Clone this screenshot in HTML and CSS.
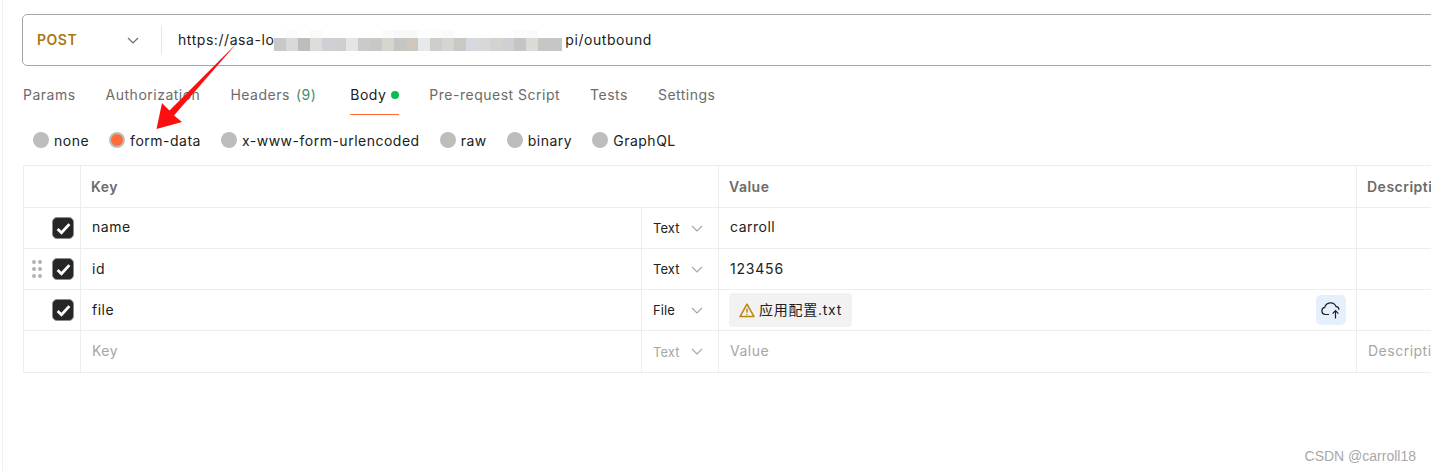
FILE: index.html
```html
<!DOCTYPE html>
<html lang="en">
<head>
<meta charset="utf-8">
<title>POST outbound</title>
<link rel="stylesheet" href="styles.css">
</head>
<body>
<main class="app">
  <div class="urlbar">
    <div class="method">
      <span class="method-name">POST</span>
      <svg class="chev chev-dark" viewBox="0 0 12 7"><path d="M1 1l5 5 5-5"/></svg>
    </div>
    <div class="url"><span>https://asa-lo</span><span class="mosaic"></span><span>pi/outbound</span></div>
  </div>

  <nav class="tabs">
    <span class="tab">Params</span>
    <span class="tab">Authorization</span>
    <span class="tab tab-headers">Headers <span class="count">(9)</span></span>
    <span class="tab tab-active">Body<i class="dot"></i></span>
    <span class="tab">Pre-request Script</span>
    <span class="tab">Tests</span>
    <span class="tab">Settings</span>
  </nav>

  <div class="radios">
    <label class="radio"><i class="circle"></i>none</label>
    <label class="radio"><i class="circle circle-on"></i>form-data</label>
    <label class="radio"><i class="circle"></i>x-www-form-urlencoded</label>
    <label class="radio"><i class="circle"></i>raw</label>
    <label class="radio"><i class="circle"></i>binary</label>
    <label class="radio"><i class="circle"></i>GraphQL</label>
  </div>

  <div class="grid">
    <div class="row row-head">
      <div class="cell cell-check"></div>
      <div class="cell cell-key wide head">Key</div>
      <div class="cell cell-value head">Value</div>
      <div class="cell cell-desc head">Description</div>
    </div>

    <div class="row">
      <div class="cell cell-check"><span class="check"><svg viewBox="0 0 14 12"><path d="M1.5 6.5l3.6 3.4 7.4-8"/></svg></span></div>
      <div class="cell cell-key nudge">name</div>
      <div class="cell cell-type">Text<svg class="chev" viewBox="0 0 12 7"><path d="M1 1l5 5 5-5"/></svg></div>
      <div class="cell cell-value nudge">carroll</div>
      <div class="cell cell-desc"></div>
    </div>

    <div class="row">
      <div class="cell cell-check">
        <span class="grip"><i></i><i></i><i></i><i></i><i></i><i></i></span>
        <span class="check"><svg viewBox="0 0 14 12"><path d="M1.5 6.5l3.6 3.4 7.4-8"/></svg></span>
      </div>
      <div class="cell cell-key">id</div>
      <div class="cell cell-type">Text<svg class="chev" viewBox="0 0 12 7"><path d="M1 1l5 5 5-5"/></svg></div>
      <div class="cell cell-value digits">123456</div>
      <div class="cell cell-desc"></div>
    </div>

    <div class="row">
      <div class="cell cell-check"><span class="check"><svg viewBox="0 0 14 12"><path d="M1.5 6.5l3.6 3.4 7.4-8"/></svg></span></div>
      <div class="cell cell-key">file</div>
      <div class="cell cell-type">File<svg class="chev" viewBox="0 0 12 7"><path d="M1 1l5 5 5-5"/></svg></div>
      <div class="cell cell-value cell-file">
        <span class="chip">
          <svg class="warn" viewBox="0 0 16 15"><path d="M8 1.2L1 13.6h14z"/><path d="M8 5.6v4.2M8 11v1.1"/></svg>
          <span>应用配置.txt</span>
        </span>
        <button class="upload" type="button" aria-label="Upload">
          <svg viewBox="0 0 22 20"><path d="M9 14.5H5.2a3.6 3.6 0 0 1-.5-7.1A6 6 0 0 1 16 6.4a3.5 3.5 0 0 1 3 3.4"/><path d="M15.5 18.5v-7.5M12.6 13.6l2.9-2.9 2.9 2.9"/></svg>
        </button>
      </div>
      <div class="cell cell-desc"></div>
    </div>

    <div class="row row-last">
      <div class="cell cell-check"></div>
      <div class="cell cell-key ph nudge">Key</div>
      <div class="cell cell-type ph">Text<svg class="chev" viewBox="0 0 12 7"><path d="M1 1l5 5 5-5"/></svg></div>
      <div class="cell cell-value ph nudge">Value</div>
      <div class="cell cell-desc ph nudge">Description</div>
    </div>
  </div>
</main>

<svg class="arrow" viewBox="0 0 1431 471"><polygon points="237,43 169.5,110.5 162,103 156.5,129 182,122 174,115.5"/></svg>
<span class="watermark">CSDN @carroll18</span>
</body>
</html>
```
FILE: styles.css
```css
* { box-sizing: border-box; }
html, body { margin: 0; height: 100%; }
body {
  position: relative;
  width: 1431px;
  height: 471px;
  overflow: hidden;
  background: #fff;
  color: #212121;
  font: 14px/20px Inter, "Noto Sans CJK SC", sans-serif;
  letter-spacing: .5px;
}
.app {
  margin-left: 2px;
  height: 471px;
  border-left: 1px solid #f0f0f0;
  padding: 14px 0 0 19px;
  overflow: hidden;
}
.urlbar {
  display: flex;
  align-items: center;
  width: 1500px;
  height: 52px;
  border: 1px solid #a6a6a6;
  border-radius: 5px;
}
.method {
  display: flex;
  align-items: center;
  justify-content: space-between;
  width: 139px;
  height: 30px;
  padding: 0 22px 0 14px;
  border-right: 1px solid #e6e6e6;
}
.method-name { font-weight: 600; color: #a9780f; }
.chev { width: 12px; height: 7px; fill: none; stroke: #a6a6a6; stroke-width: 1.2; }
.chev-dark { stroke: #6b6b6b; }
.url { display: flex; align-items: center; padding-left: 16px; letter-spacing: .56px; }
.mosaic {
  width: 291px;
  height: 21px;
  background-repeat: no-repeat;
  background-position: 0 8px, 0 0;
  background-size: 288px 13px, 288px 8px;
  background-image:
    linear-gradient(90deg,
      #c8c8c8 0 12px, #d8d9db 0 24px, #bdbdbd 0 36px, #dcdcd8 0 48px, #cfcfd5 0 60px, #cfcfcf 0 72px,
      #e5e5e3 0 84px, #c9cacb 0 96px, #c8c8c7 0 108px, #d6d5ce 0 120px, #c4c6c6 0 132px, #cdc7be 0 144px,
      #e5e9ec 0 156px, #cdcdc9 0 168px, #d5d5d3 0 180px, #c9c8c3 0 192px, #d7d9e0 0 204px, #d9d7d7 0 216px,
      #d4d3cf 0 228px, #cfd0d2 0 240px, #c5c6c4 0 252px, #d9dcd5 0 264px, #c6c7c5 0 288px),
    linear-gradient(90deg,
      #fff 0 12px, #fbfbfb 0 24px, #fff 0 36px, #fafafa 0 48px, #fff 0 108px, #fafafa 0 120px,
      #f8f8f8 0 144px, #fcfdfd 0 168px, #fafafa 0 180px, #fff 0 240px, #fbfbfb 0 252px, #f9fbfb 0 264px, #fff 0 288px);
}
.tabs {
  display: flex;
  gap: 30px;
  height: 30px;
  margin: 19px 0 0 1px;
  color: #6b6b6b;
}
.tab { display: flex; gap: 6px; height: 30px; }
.tab-headers { margin-right: 4px; }
.count { color: #4a8a70; }
.tab-active {
  gap: 5px;
  color: #212121;
  border-bottom: 1px solid #ff6c37;
}
.dot { width: 8px; height: 8px; margin-top: 6px; border-radius: 50%; background: #0cbb52; }
.radios {
  display: flex;
  gap: 20px;
  margin: 15px 0 0 11px;
}
.radio { display: flex; align-items: center; gap: 5px; padding-top: 1px; }
.circle {
  width: 16px;
  height: 16px;
  margin-top: -2px;
  border-radius: 50%;
  background: #bdbdbd;
}
.circle-on { border: 2px solid #bdbdbd; background: #ff6c37; }
.grid {
  width: 1500px;
  margin: 14px 0 0 1px;
  border-top: 1px solid #ededed;
  border-left: 1px solid #ededed;
}
.row {
  display: grid;
  grid-template-columns: 57px 561px 77px 638px 1fr;
  height: 41px;
  border-bottom: 1px solid #ededed;
}
.row-head { grid-template-columns: 57px 638px 638px 1fr; height: 42px; }
.row-last { height: 42px; }
.cell {
  display: flex;
  align-items: center;
  padding: 0 11px;
  border-right: 1px solid #ededed;
  min-width: 0;
  overflow: hidden;
  white-space: nowrap;
}
.head { font-weight: 600; color: #6b6b6b; padding-left: 10px; }
.cell-check { justify-content: flex-end; gap: 10px; padding: 0 6px 0 0; }
.cell-type { justify-content: space-between; padding: 0 15px 0 11px; font-size: 13px; letter-spacing: .1px; }
.digits { letter-spacing: .8px; }
.ph { color: #a6a6a6; }
.nudge { padding-bottom: 2px; }
.check {
  display: flex;
  align-items: center;
  justify-content: center;
  width: 22px;
  height: 22px;
  border: 1px solid #8c8c8c;
  border-radius: 5px;
  background: #262626;
}
.check svg { width: 15px; height: 13px; fill: none; stroke: #fff; stroke-width: 2.6; }
.grip { display: grid; grid-template-columns: 4px 4px; gap: 3px 2px; }
.grip i { width: 4px; height: 4px; border-radius: 50%; background: #b3b3b3; }
.cell-file { justify-content: space-between; padding: 0 10px; }
.chip {
  display: flex;
  align-items: center;
  gap: 4px;
  height: 34px;
  padding: 0 10px;
  border-radius: 4px;
  background: #f2f2f2;
  letter-spacing: .75px;
}
.warn { width: 16px; height: 15px; fill: none; stroke: #b8860b; stroke-width: 1.5; stroke-linejoin: round; }
.upload {
  display: flex;
  align-items: center;
  justify-content: center;
  width: 30px;
  height: 30px;
  padding: 0;
  border: 0;
  border-radius: 5px;
  background: #e6effd;
}
.upload svg { width: 22px; height: 20px; fill: none; stroke: #212121; stroke-width: 1.2; }
.arrow { position: absolute; left: 0; top: 0; width: 1431px; height: 471px; pointer-events: none; }
.arrow polygon { fill: #fb0f0f; }
.watermark {
  position: absolute;
  right: 15px;
  top: 446px;
  color: #a8a8a8;
  letter-spacing: 0;
  font: 14px/20px "Liberation Sans", sans-serif;
}
```
